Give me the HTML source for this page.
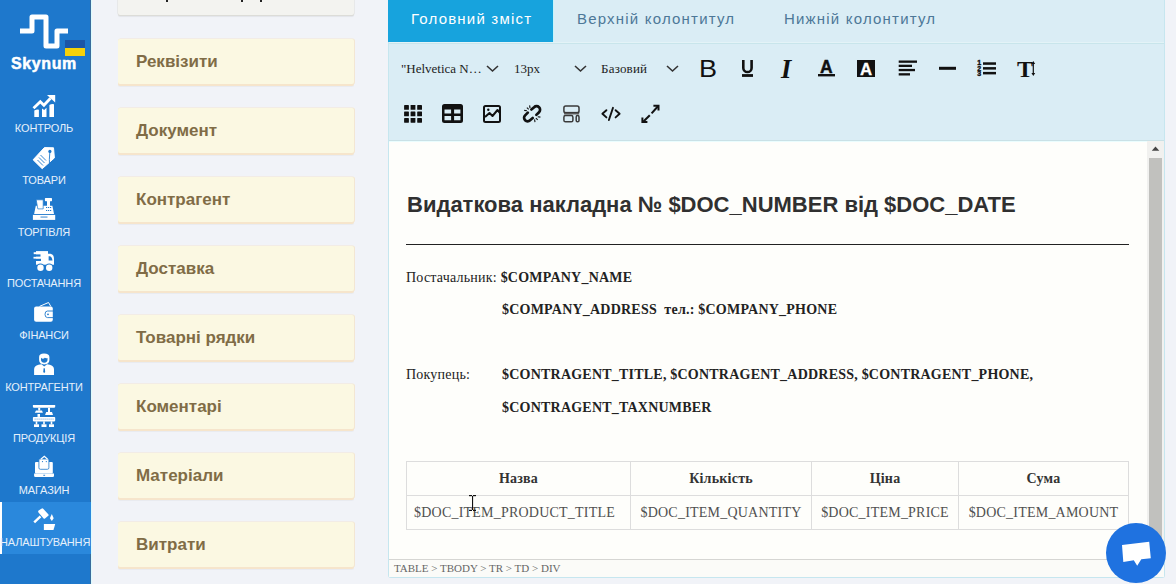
<!DOCTYPE html>
<html><head><meta charset="utf-8">
<style>
*{margin:0;padding:0;box-sizing:border-box}
html,body{width:1176px;height:584px;overflow:hidden;background:#f1f3f8;font-family:"Liberation Sans",sans-serif;position:relative}
.abs{position:absolute}
#side{position:absolute;left:0;top:0;width:91px;height:584px;background:#1e78cc}
#sideline{position:absolute;left:91px;top:0;width:1px;height:584px;background:#dcfbfe}
#sidedark{position:absolute;left:90px;top:0;width:1px;height:584px;background:#386b9c}
.navl{position:absolute;left:0;width:88px;text-align:center;color:#e6f0fb;font-size:11px;line-height:13px;white-space:nowrap;letter-spacing:-0.15px}
.nav{position:absolute;left:0;width:91px;height:52px;color:#e6f0fb;font-size:11px;text-align:center;white-space:nowrap}
.nav .lbl{position:absolute;left:0;right:0;top:20px;line-height:13px}
.nav svg{position:absolute;left:32px;top:3px}
.active{background:#2a88dc}
.card{position:absolute;left:118px;width:236px;height:45px;background:#fbf8e2;border-radius:2px;box-shadow:0 2px 0 #f6e5cc,0 3px 1px rgba(0,0,0,.035),0.5px 0 0 0.5px #f3e6d3;color:#806c46;font-weight:bold;font-size:17px}
.card span{position:absolute;left:18px;top:12.6px;line-height:20px}
#editor{position:absolute;left:388px;top:0;width:777px;height:578px;border:1px solid #c6e6ef;border-top:none;border-radius:0 0 3px 3px;background:#daedf5}
.tab{position:absolute;top:0;height:42px;line-height:38px;font-size:15px;letter-spacing:1.2px;color:#4d7898}
#content{position:absolute;left:389px;top:141px;width:775px;height:418px;background:#fefefb;font-family:"Liberation Serif",serif;color:#222}
.txt{font-family:"Liberation Serif",serif;font-size:14px;line-height:18px;color:#222;white-space:nowrap;letter-spacing:0.22px}
table{border-collapse:collapse;font-family:"Liberation Serif",serif;font-size:14px}
td{border:1px solid #ddd;height:34px;padding:0;white-space:nowrap;color:#333;letter-spacing:0.22px;text-align:center}
td.c1{text-align:left;padding-left:7px}
.th td{text-align:center;font-weight:bold;color:#333}
.td td{color:#505050}
.ser{font-family:"Liberation Serif",serif}
</style></head><body>
<div id="side"></div>
<div id="sideline"></div><div id="sidedark"></div>

<!-- logo -->
<svg class="abs" style="left:0;top:0" width="91" height="80" viewBox="0 0 91 80">
  <path d="M20 31 H32 V17 H46 V46 H57 V31 H68" fill="none" stroke="#fff" stroke-width="5" stroke-linejoin="round"/>
  <rect x="65" y="40" width="20" height="8" fill="#1b55a6"/>
  <rect x="65" y="48" width="20" height="8" fill="#f5d10a"/>
</svg>
<div class="abs" style="left:11px;top:54px;color:#fff;font-weight:bold;font-size:16px;line-height:20px;letter-spacing:0.6px;-webkit-text-stroke:0.5px #fff;white-space:nowrap">Skynum</div>

<!-- nav -->
<div class="abs" style="left:0;top:502px;width:91px;height:52px;background:#2a88dc"></div>
<div class="abs" style="left:0;top:502px;width:1.5px;height:52px;background:#fff"></div>
<div class="navl" style="top:122.20px">КОНТРОЛЬ</div>
<div class="navl" style="top:173.90px">ТОВАРИ</div>
<div class="navl" style="top:225.60px">ТОРГІВЛЯ</div>
<div class="navl" style="top:277.30px">ПОСТАЧАННЯ</div>
<div class="navl" style="top:329.00px">ФІНАНСИ</div>
<div class="navl" style="top:380.70px">КОНТРАГЕНТИ</div>
<div class="navl" style="top:432.40px">ПРОДУКЦІЯ</div>
<div class="navl" style="top:484.10px">МАГАЗИН</div>
<div class="navl" style="top:535.80px">НАЛАШТУВАННЯ</div>
<svg class="abs" style="left:0;top:0" width="91" height="584" viewBox="0 0 91 584">
<g fill="#fff">
 <!-- chart -->
 <path d="M34.3 110.5 Q36.5 109.2 38.9 109.7 V116.9 H34.3 Z"/>
 <path d="M42 108.5 L44.2 110 L46.5 107.8 V116.9 H42 Z"/>
 <path d="M49.4 105 Q51.7 103.5 54 104.2 V116.9 H49.4 Z"/>
 <path d="M33.5 108.3 L40.3 101.8 L43.9 105.2 L50.5 98.2" fill="none" stroke="#1e78cc" stroke-width="5" stroke-linejoin="miter"/>
 <path d="M33.5 108.3 L40.3 101.8 L43.9 105.2 L50.5 98.2" fill="none" stroke="#fff" stroke-width="2.8" stroke-linejoin="miter"/>
 <path d="M47 95.1 L55.2 95.1 L55.2 102.5 Z"/>
 <!-- tag -->
 <path d="M33.1 159.8 L44.4 147.6 L53.5 147.8 L54.4 157.9 L42.2 168.7 Z" stroke="#fff" stroke-width="1" stroke-linejoin="round"/>
 <circle cx="49.9" cy="151.4" r="1.6" fill="#1e78cc"/>
 <path d="M40.5 155 L46 160.5 M39 157.5 L44.5 163 M37.5 160 L43 165.5" stroke="#1e78cc" stroke-width="0.9"/>
 <path d="M49.9 151.5 Q49 160 49.5 165.5 Q51 167.5 52 161" fill="none" stroke="#1e78cc" stroke-width="0.9"/>
 <!-- register -->
 <rect x="32.9" y="214.9" width="22.3" height="5"/>
 <rect x="40.5" y="216.6" width="7" height="0.9" fill="#1e78cc"/>
 <path d="M35.8 205.8 H52.4 L54 213.9 H34.1 Z"/>
 <path d="M36.2 199.8 H43.2 V208.9 H37.8 Z" stroke="#1e78cc" stroke-width="0.7"/>
 <rect x="44.9" y="198.1" width="7.1" height="3.1" rx="0.6"/>
 <rect x="47" y="201" width="3" height="5"/>
 <g fill="#1e78cc"><rect x="46" y="207" width="1.2" height="1"/><rect x="48" y="207" width="1.2" height="1"/><rect x="50" y="207" width="1.2" height="1"/><rect x="46" y="210" width="1.2" height="1"/><rect x="48" y="210" width="1.2" height="1"/><rect x="50" y="210" width="1.2" height="1"/></g>
 <!-- truck -->
 <rect x="36" y="251.1" width="12" height="13.6"/>
 <path d="M48 253.7 H50.5 Q54 254.5 54 259 V264.7 H48 Z"/>
 <path d="M48.6 256.2 H50.2 Q52.2 257 52.5 260.5 H48.6 Z" fill="#1e78cc"/>
 <rect x="33.7" y="252.2" width="3" height="2.2"/>
 <rect x="33.5" y="256.6" width="6" height="2.2"/>
 <rect x="33" y="254.4" width="7.5" height="2.2" fill="#1e78cc"/>
 <rect x="33" y="258.8" width="8" height="2.2" fill="#1e78cc"/>
 <circle cx="40.5" cy="267.8" r="4.3" fill="#1e78cc"/><circle cx="49.2" cy="267.8" r="4.3" fill="#1e78cc"/>
 <circle cx="40.5" cy="267.8" r="3.2"/><circle cx="49.2" cy="267.8" r="3.2"/>
 <!-- wallet -->
 <rect x="34.1" y="306.6" width="18.7" height="15.1" rx="2"/>
 <path d="M39.5 306.4 L48.5 302.5 L50.8 306.4" fill="none" stroke="#fff" stroke-width="1"/>
 <path d="M53.5 311 H47.5 Q45 311 45 314.3 Q45 317.6 47.5 317.6 H53.5" fill="none" stroke="#1e78cc" stroke-width="0.9"/>
 <circle cx="48" cy="314.3" r="0.9" fill="#1e78cc"/>
 <!-- person -->
 <path d="M39.1 357 Q39 353.4 44 353.4 Q49.4 353.4 49.4 357 V360 Q49.4 364 44.2 364.5 Q39.1 364 39.1 360 Z"/>
 <path d="M41 357.8 Q43 359.5 44.8 357.8 Q46 358.6 47.5 358 V359.8 Q47.5 362.5 44.2 362.8 Q41 362.5 41 359.8 Z" fill="#1e78cc"/>
 <path d="M34.1 374.9 V369.5 Q34.1 365.8 38.5 364.8 L41.5 364.2 L44.2 366.4 L47 364.2 L49.8 364.8 Q54 365.8 54 369.5 V374.9 Z"/>
 <path d="M43.6 368.3 H44.8 L45.2 372 L44.2 373 L43.2 372 Z" fill="#1e78cc"/>
 <!-- production -->
 <path d="M32.9 405.1 H55.2 V406.8 Q55.2 407.8 54 407.8 H34 Q32.9 407.8 32.9 406.8 Z"/>
 <rect x="38.2" y="407.8" width="2" height="2.8"/><path d="M36 410.4 H42 L42.9 412.8 H34.8 Z"/>
 <rect x="48" y="407.8" width="2" height="4.5"/><path d="M46.2 412 H52 L53 415 H45.1 Z"/>
 <rect x="37.5" y="414" width="2.5" height="2.9"/>
 <rect x="32.9" y="416.9" width="22.3" height="4.5" rx="0.8"/>
 <path d="M34.5 419.1 H53.6" stroke="#1e78cc" stroke-width="0.6" stroke-dasharray="1.2 0.8"/>
 <rect x="35.7" y="421.4" width="1.6" height="3"/><rect x="43.2" y="421.4" width="1.6" height="3"/><rect x="50.7" y="421.4" width="1.6" height="3"/>
 <rect x="34" y="424.3" width="5" height="2.7"/><rect x="41.5" y="424.3" width="5" height="2.7"/><rect x="49" y="424.3" width="5" height="2.7"/>
 <!-- laptop -->
 <rect x="35" y="462.1" width="17.8" height="11.3" rx="1"/>
 <path d="M34.1 473.4 H54 V475.8 Q54 477 52.8 477 H35.3 Q34.1 477 34.1 475.8 Z"/>
 <rect x="43.3" y="474.8" width="1.8" height="0.9" fill="#1e78cc"/>
 <path d="M38.9 459 H48.9 V467.8 Q48.9 469.3 47.4 469.3 H40.4 Q38.9 469.3 38.9 467.8 Z" stroke="#1e78cc" stroke-width="0.8"/>
 <path d="M40.8 459.3 L44.3 456.2 L47.6 459.3" fill="none" stroke="#fff" stroke-width="1.2"/>
 <circle cx="42.5" cy="461.6" r="0.6" fill="#1e78cc"/><circle cx="46.3" cy="461.6" r="0.6" fill="#1e78cc"/>
 <!-- gavel -->
 <path d="M38.6 510.6 L41.8 508.4 Q42.5 508 43.2 508.8 L48.5 514.5 Q49 515.2 48.3 515.7 L45 518.6 Q44.3 519.1 43.6 518.4 L38.3 512.3 Q37.8 511.3 38.6 510.6 Z"/>
 <path d="M34.2 522.4 L40.5 516.4" stroke="#fff" stroke-width="2.4"/>
 <path d="M51.8 514.1 L53.7 518.3 L51.8 521 L49.9 518.3 Z"/>
 <path d="M43.9 523.9 H55.2 L53.5 529.9 H43.9 Z"/>
</g>
</svg>

<!-- cards -->
<div class="card" style="top:-30px;background:#f3f3f0;box-shadow:0 1px 0 #dcdcd8,0 2px 1px rgba(0,0,0,.06),0 0 0 0.5px #e0e0dc"></div>
<div class="abs" style="left:166px;top:0;width:2px;height:1.5px;background:#222"></div><div class="abs" style="left:241px;top:0;width:2px;height:1.5px;background:#222"></div><div class="abs" style="left:260px;top:0;width:2px;height:1.5px;background:#222"></div>
<div class="card" style="top:39px"><span>Реквізити</span></div>
<div class="card" style="top:108px"><span>Документ</span></div>
<div class="card" style="top:177px"><span>Контрагент</span></div>
<div class="card" style="top:246px"><span>Доставка</span></div>
<div class="card" style="top:315px"><span>Товарні рядки</span></div>
<div class="card" style="top:384px"><span>Коментарі</span></div>
<div class="card" style="top:453px"><span>Матеріали</span></div>
<div class="card" style="top:522px"><span>Витрати</span></div>

<!-- editor -->
<div id="editor"></div>
<div class="abs" style="left:388px;top:0;width:165px;height:42px;background:#17a3dd"></div>
<div class="tab" style="left:411px;color:#fff">Головний зміст</div>
<div class="tab" style="left:577px">Верхній колонтитул</div>
<div class="tab" style="left:784px">Нижній колонтитул</div>
<div class="abs" style="left:389px;top:42px;width:775px;height:1px;background:#e3f3f7"></div><div class="abs" style="left:389px;top:43px;width:775px;height:1px;background:#c8e5eb"></div><div class="abs" style="left:553px;top:0;width:1px;height:42px;background:#c5f4fb"></div>
<div class="abs" style="left:389px;top:140px;width:775px;height:1px;background:#c9e1e6"></div>


<!-- toolbar text -->
<div class="abs ser" style="left:401px;top:60px;font-size:13px;line-height:18px;color:#222;white-space:nowrap">"Helvetica N…</div>
<div class="abs ser" style="left:514px;top:60px;font-size:13px;line-height:18px;color:#222">13px</div>
<div class="abs ser" style="left:601px;top:60px;letter-spacing:0.2px;font-size:13px;line-height:18px;color:#222">Базовий</div>
<div class="abs" style="left:699px;top:56px;font-size:23.5px;line-height:26px;color:#111;transform:scaleX(1.15);transform-origin:0 0">B</div>
<div class="abs ser" style="left:781px;top:56px;font-size:26.5px;line-height:26px;color:#111;font-weight:bold;font-style:italic">I</div>
<div class="abs" style="left:820px;top:58px;font-size:17.5px;line-height:18px;color:#111;font-weight:bold;-webkit-text-stroke:0.4px #111">A</div>
<div class="abs" style="left:857px;top:60px;width:18px;height:17px;background:#111"></div>
<div class="abs" style="left:860px;top:61px;font-size:16.8px;line-height:18px;color:#fff;font-weight:bold;-webkit-text-stroke:0.3px #fff">A</div>
<div class="abs ser" style="left:1017px;top:55.5px;font-size:24px;line-height:26px;color:#111;font-weight:bold">T</div>
<svg class="abs" style="left:0;top:0" width="1176" height="584" viewBox="0 0 1176 584">
 <g fill="none" stroke="#333" stroke-width="1.6">
  <path d="M487 66 L492.5 71 L498 66"/>
  <path d="M575 66 L580.5 71 L586 66"/>
  <path d="M667 66 L672.5 71 L678 66"/>
 </g>
 <g fill="#111">
  <path d="M743.3 60 V67.9 A4.15 4.15 0 0 0 751.6 67.9 V60" fill="none" stroke="#111" stroke-width="2.6"/>
  <rect x="742" y="74.1" width="11" height="2.8"/>
  <rect x="818" y="74" width="17" height="2.4"/>
  <rect x="898.7" y="60.5" width="18.3" height="2.3"/>
  <rect x="898.7" y="64.7" width="13.3" height="2.3"/>
  <rect x="898.7" y="68.9" width="16.3" height="2.3"/>
  <rect x="898.7" y="73.2" width="11.3" height="2.3"/>
  <rect x="939" y="66.8" width="17" height="3"/>
  <rect x="983" y="62.3" width="13" height="2.5"/>
  <rect x="983" y="67.1" width="13" height="2.5"/>
  <rect x="983" y="71.9" width="13" height="2.5"/>
  <text x="977.3" y="65.3" font-size="7" font-weight="bold" font-family="Liberation Sans" stroke="#111" stroke-width="0.4">1</text>
  <text x="977.3" y="70.6" font-size="7" font-weight="bold" font-family="Liberation Sans" stroke="#111" stroke-width="0.4">2</text>
  <text x="977.3" y="76.2" font-size="7" font-weight="bold" font-family="Liberation Sans" stroke="#111" stroke-width="0.4">3</text>
  <path d="M1033.3 61 L1035.2 64 H1033.9 V73 H1035.2 L1033.3 76 L1031.4 73 H1032.7 V64 H1031.4 Z"/>
 </g>
 <!-- row 2 -->
 <g fill="#111">
  <rect x="404.1" y="105.1" width="4.8" height="4.7" rx="0.4"/><rect x="410.6" y="105.1" width="4.8" height="4.7" rx="0.4"/><rect x="417.2" y="105.1" width="4.8" height="4.7" rx="0.4"/><rect x="404.1" y="111.6" width="4.8" height="4.7" rx="0.4"/><rect x="410.6" y="111.6" width="4.8" height="4.7" rx="0.4"/><rect x="417.2" y="111.6" width="4.8" height="4.7" rx="0.4"/><rect x="404.1" y="118" width="4.8" height="4.7" rx="0.4"/><rect x="410.6" y="118" width="4.8" height="4.7" rx="0.4"/><rect x="417.2" y="118" width="4.8" height="4.7" rx="0.4"/>
  <path fill-rule="evenodd" d="M444.5 104 H460.5 A2.5 2.5 0 0 1 463 106.5 V120.5 A2.5 2.5 0 0 1 460.5 123 H444.5 A2.5 2.5 0 0 1 442 120.5 V106.5 A2.5 2.5 0 0 1 444.5 104 Z M444.5 109.4 V113.4 H451.1 V109.4 Z M454.1 109.4 V113.4 H460.4 V109.4 Z M444.5 116 V120.2 H451.1 V116 Z M454.1 116 V120.2 H460.4 V116 Z"/>
 </g>
 <g fill="none" stroke="#111" stroke-width="2">
  <rect x="484" y="106" width="16" height="16" rx="1.5"/>
  <path d="M485 117 L489.5 113 L492.5 116 L497.5 110 L500 113" stroke-linejoin="round"/>
  
  
  
  
  
  
  
 </g>
 <g fill="none" stroke="#111" stroke-width="1.9" stroke-linecap="round" stroke-linejoin="round">
  <path d="M606.4 110.2 L602.4 113.8 L606.4 117.4"/>
  <path d="M615.6 110.2 L619.6 113.8 L615.6 117.4"/>
  <path d="M613 107.8 L608.9 120"/>
 </g>
 <g fill="none" stroke="#111" stroke-width="2">
  <path d="M643.2 121.8 L649.8 115.2"/><path d="M651.6 113.4 L658.2 106"/>
  <path d="M653.4 105.8 H658.5 V110.6"/>
  <path d="M642.4 117.6 V122 H647.4"/>
 </g>
<circle cx="488.3" cy="109.8" r="1.2" fill="#111"/>
 <!-- unlink -->
 <g transform="translate(532.3 113.8) scale(0.9) translate(-532 -113.8)">
 <g fill="none" stroke="#111" stroke-width="3" stroke-linecap="round">
  <path d="M531 109 L534 106.5 A3.6 3.6 0 0 1 539.5 112 L536.5 115"/>
  <path d="M532.5 118.5 L529.5 121 A3.6 3.6 0 0 1 524 115.5 L527 112.5"/>
 </g>
 <g stroke="#111" stroke-width="1.2">
  <path d="M526 107 L528 109"/><path d="M523 110 L526 110.5"/><path d="M529 104.5 L529.5 107.5"/>
  <path d="M538 120.5 L536 118.5"/><path d="M541 117.5 L538 117"/><path d="M535 123 L534.5 120"/>
 </g>
 </g>
 <!-- template -->
 <rect x="564" y="111.8" width="15.2" height="2.8" fill="#777"/>
 <g fill="none" stroke="#3a3a3a" stroke-width="1.5">
  <rect x="563.9" y="106.1" width="15.1" height="6.6" rx="1.8"/>
  <rect x="563.9" y="115.6" width="9" height="6.2" rx="1.6"/>
  <rect x="576.2" y="115.6" width="2.8" height="6.2" rx="1.3"/>
 </g>
</svg>

<div id="content">
 <div class="abs" style="left:0;top:0;width:758px;height:1px;background:#eafdfe"></div>
 <div class="abs" style="left:18px;top:51px;font-family:'Liberation Sans',sans-serif;font-weight:bold;font-size:22px;line-height:26px;color:#303030;white-space:nowrap">Видаткова накладна № $DOC_NUMBER від $DOC_DATE</div>
 <div class="abs" style="left:17px;top:103px;width:723px;height:1px;background:#222"></div>
 <div class="abs txt" style="left:17px;top:128px">Постачальник: <b>$COMPANY_NAME</b></div>
 <div class="abs txt" style="left:113px;top:160px"><b>$COMPANY_ADDRESS&nbsp; тел.: $COMPANY_PHONE</b></div>
 <div class="abs txt" style="left:17px;top:225px">Покупець:</div>
 <div class="abs txt" style="left:113px;top:225px"><b>$CONTRAGENT_TITLE, $CONTRAGENT_ADDRESS, $CONTRAGENT_PHONE,</b></div>
 <div class="abs txt" style="left:113px;top:258px"><b>$CONTRAGENT_TAXNUMBER</b></div>
 <table class="abs" style="left:17px;top:320px">
  <tr class="th"><td style="width:224px">Назва</td><td style="width:181px">Кількість</td><td style="width:147px">Ціна</td><td style="width:170px">Сума</td></tr>
  <tr class="td"><td class="c1">$DOC_ITEM_PRODUCT_TITLE</td><td>$DOC_ITEM_QUANTITY</td><td>$DOC_ITEM_PRICE</td><td>$DOC_ITEM_AMOUNT</td></tr>
 </table>
</div>


<!-- scrollbar -->
<div class="abs" style="left:1147px;top:141px;width:17px;height:418px;background:#f1f1ef"></div>
<div class="abs" style="left:1149px;top:158px;width:13px;height:395px;background:#c1c1be"></div>
<svg class="abs" style="left:1147px;top:141px" width="17" height="14"><path d="M4.8 9.7 L8.5 5.6 L12.3 9.7 Z" fill="#444"/></svg>
<!-- status bar -->
<div class="abs" style="left:389px;top:559px;width:775px;height:1px;background:#d6d6d3"></div>
<div class="abs" style="left:389px;top:560px;width:775px;height:17px;background:#fbfbf8"></div>
<div class="abs ser" style="left:394px;top:560px;font-size:11px;line-height:16px;color:#666;white-space:nowrap">TABLE &gt; TBODY &gt; TR &gt; TD &gt; DIV</div>
<!-- cursor -->
<svg class="abs" style="left:460px;top:490px" width="25" height="25"><g fill="#111"><rect x="9" y="5" width="3" height="1.2"/><rect x="13" y="5" width="3" height="1.2"/><rect x="12" y="6" width="1.1" height="14"/><rect x="9" y="19.8" width="3" height="1.2"/><rect x="13" y="19.8" width="3" height="1.2"/></g></svg>
<!-- chat -->
<div class="abs" style="left:1106px;top:523px;width:60px;height:60px;border-radius:50%;background:#1f72e0"></div>
<svg class="abs" style="left:1106px;top:523px" width="60" height="60"><path d="M16 21.9 L43.2 18.7 L44.8 35.2 L35.3 36.3 L31.2 42.8 L27.8 37.3 L17.3 39 Z" fill="#fff"/></svg>
</body></html>
